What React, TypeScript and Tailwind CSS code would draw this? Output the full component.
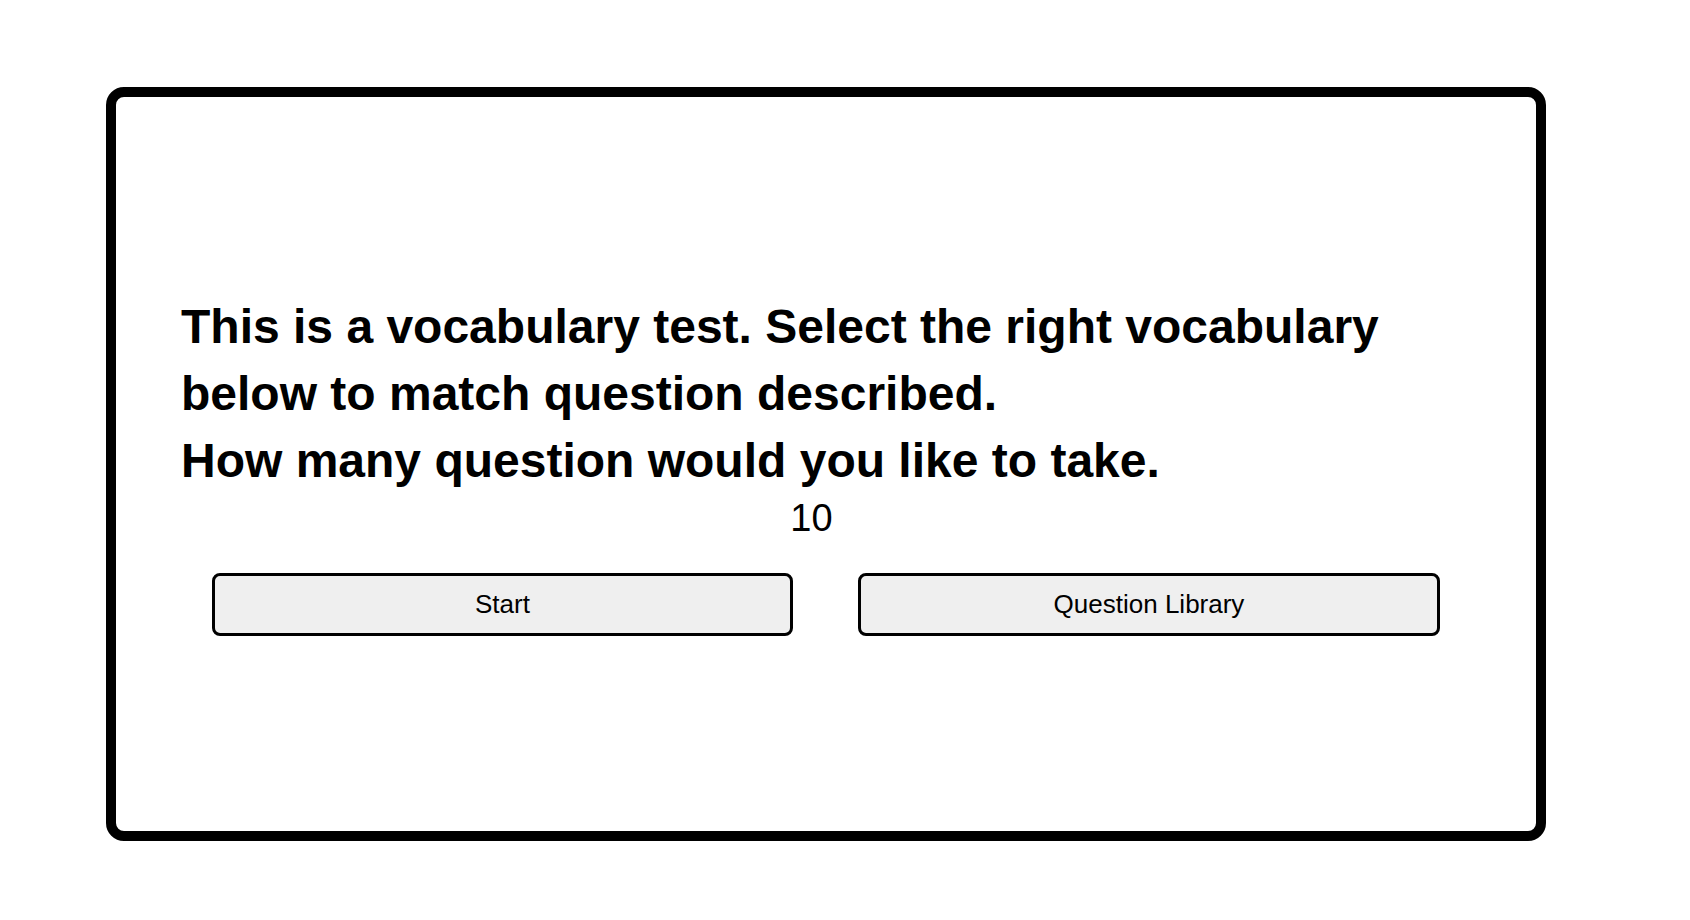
export default function App() {
  return (
    <div className="min-h-screen bg-white pl-[106px] pt-[87px]">
      {/* Card */}
      <div className="w-[1440px] h-[754px] border-[10px] border-black rounded-[18px] flex flex-col justify-center px-[65px]">
        <h1 className="font-bold text-[48px] leading-[67px] text-black font-['Liberation_Sans',Arial,sans-serif]">
          This is a vocabulary test. Select the right vocabulary below to match question described.
          <br />
          How many question would you like to take.
        </h1>

        <div className="self-center mt-[2px] mr-[29px] text-[38px] leading-[44px] text-black font-['Liberation_Sans',Arial,sans-serif]">
          10
        </div>

        {/* Buttons */}
        <div className="flex justify-center gap-[65px] mt-[33px]">
          <button className="w-[581px] h-[63px] border-[3px] border-black rounded-[8px] bg-[#efefef] text-[26px] text-black font-['Liberation_Sans',Arial,sans-serif]">
            Start
          </button>
          <button className="w-[582px] h-[63px] border-[3px] border-black rounded-[8px] bg-[#efefef] text-[26px] text-black font-['Liberation_Sans',Arial,sans-serif]">
            Question Library
          </button>
        </div>
      </div>
    </div>
  );
}
